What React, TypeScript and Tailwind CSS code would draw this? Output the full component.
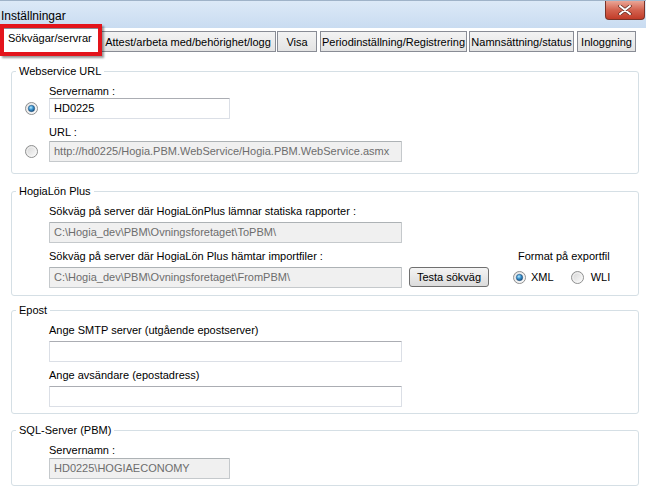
import React from "react";
import clsx from "clsx";

type Tab = { label: string; className: string };

const tabs: Tab[] = [
  { label: "Attest/arbeta med/behörighet/logg", className: "w-[176px]" },
  { label: "Visa", className: "ml-[1px] w-[40px]" },
  { label: "Periodinställning/Registrering", className: "ml-[3px] w-[147px]" },
  { label: "Namnsättning/status", className: "ml-[2px] w-[105px]" },
  { label: "Inloggning", className: "ml-[3px] w-[59px]" },
];

function Radio({ checked }: { checked?: boolean }) {
  return (
    <svg width="13" height="13" viewBox="0 0 13 13" className="shrink-0">
      <defs>
        <linearGradient id="rbBg" x1="0" y1="0" x2="1" y2="1">
          <stop offset="0" stopColor="#d2d2d2" />
          <stop offset="1" stopColor="#ffffff" />
        </linearGradient>
        <radialGradient id="rbDot" cx="0.4" cy="0.35" r="0.75">
          <stop offset="0" stopColor="#b5ebff" />
          <stop offset="0.45" stopColor="#3b93cf" />
          <stop offset="1" stopColor="#0b3b68" />
        </radialGradient>
      </defs>
      <circle cx="6.5" cy="6.5" r="6" fill="url(#rbBg)" stroke="#8f9090" />
      <circle cx="6.5" cy="6.5" r="4.6" fill="none" stroke="#f6f6f6" strokeWidth="0.8" />
      {checked && <circle cx="6.5" cy="6.5" r="3.2" fill="url(#rbDot)" stroke="#1d4f7c" strokeWidth="0.5" />}
    </svg>
  );
}

function TextBox({ value, disabled, className }: { value?: string; disabled?: boolean; className?: string }) {
  return (
    <div
      className={clsx(
        "flex h-[21px] items-center overflow-hidden whitespace-nowrap rounded-[1px] border pl-[4px] text-[11px]",
        disabled
          ? "border-[#c5c9cc] border-t-[#adb2b5] bg-[#f0f0f0] text-[#6d6d6d]"
          : "border-[#dbdfe6] border-t-[#abadb3] bg-white text-black",
        className
      )}
    >
      {value}
    </div>
  );
}

function Label({ children, className }: { children: React.ReactNode; className?: string }) {
  return <div className={clsx("whitespace-nowrap text-[11px] leading-[12px]", className)}>{children}</div>;
}

function GroupBox({ title, className, children }: { title: string; className?: string; children: React.ReactNode }) {
  return (
    <fieldset className={clsx("ml-[11px] w-[628px] rounded-[3px] border border-[#d5dfe5]", className)}>
      <legend className="ml-[4px] px-[3px] text-[11px] leading-[12px]">{title}</legend>
      {children}
    </fieldset>
  );
}

export default function App() {
  return (
    <div className="relative h-[491px] w-[646px] overflow-hidden bg-white font-['Liberation_Sans',Arial,sans-serif] text-black">
      {/* Title bar */}
      <div className="flex h-[28px] items-start justify-between border-t border-[#9fb3c8] bg-linear-to-b from-[#dce9f7] to-[#c9dcf1]">
        <div className="pl-[1px] pt-[8px] text-[12px] leading-[14px]">Inställningar</div>
        <div className="mr-[1px] flex h-[19px] w-[40px] items-center justify-center rounded-b-[4px] border border-t-0 border-[#7a3328] bg-linear-to-b from-[#e9a596] via-[#d3624f] to-[#c13b28]">
          <svg width="14" height="10" viewBox="0 0 14 10">
            <path d="M2 1 L12 9 M12 1 L2 9" stroke="#5b2a22" strokeWidth="3.4" strokeLinecap="round" />
            <path d="M2 1 L12 9 M12 1 L2 9" stroke="#ffffff" strokeWidth="2" strokeLinecap="round" />
          </svg>
        </div>
      </div>

      {/* Tabs */}
      <div className="flex h-[24px] items-end bg-white pl-[2px]">
        <div className="h-[24px] w-[98px] border border-b-0 border-[#898c95] bg-white pl-[5px] pt-[3px] text-[11px] leading-[12px]">
          Sökvägar/servrar
        </div>
        {tabs.map((t) => (
          <div
            key={t.label}
            className={clsx(
              "flex h-[21px] items-center justify-center border border-[#898c95] bg-linear-to-b from-[#f3f3f3] to-[#e3e3e3] text-[11px] leading-[12px] whitespace-nowrap",
              t.className
            )}
          >
            {t.label}
          </div>
        ))}
      </div>

      {/* Red highlight around the selected tab */}
      <div className="pointer-events-none absolute left-0 top-[24px] h-[32px] w-[102px] border-[4px] border-[#e3141b] shadow-[2px_2px_2px_rgba(0,0,0,0.4)]" />

      {/* Webservice URL */}
      <GroupBox title="Webservice URL" className="mt-[13px] pb-[11px]">
        <div className="flex pt-[8px]">
          <div className="flex w-[37px] items-end pb-[4px] pl-[13px]">
            <Radio checked />
          </div>
          <div>
            <Label>Servernamn :</Label>
            <TextBox className="mt-[1px] w-[181px]" value="HD0225" />
          </div>
        </div>
        <div className="mt-[7px] flex">
          <div className="flex w-[37px] items-end pb-[4px] pl-[13px]">
            <Radio />
          </div>
          <div>
            <Label>URL :</Label>
            <TextBox
              disabled
              className="mt-[3px] w-[353px]"
              value="http://hd0225/Hogia.PBM.WebService/Hogia.PBM.WebService.asmx"
            />
          </div>
        </div>
      </GroupBox>

      {/* HogiaLön Plus */}
      <GroupBox title="HogiaLön Plus" className="mt-[11px] pb-[7px]">
        <div className="pl-[37px] pt-[8px]">
          <Label>Sökväg på server där HogiaLönPlus lämnar statiska rapporter :</Label>
          <TextBox disabled className="mt-[5px] w-[353px]" value={"C:\\Hogia_dev\\PBM\\Ovningsforetaget\\ToPBM\\"} />
          <div className="mt-[7px] flex">
            <div>
              <Label>Sökväg på server där HogiaLön Plus hämtar importfiler :</Label>
              <div className="mt-[5px] flex items-start">
                <TextBox disabled className="w-[353px]" value={"C:\\Hogia_dev\\PBM\\Ovningsforetaget\\FromPBM\\"} />
                <button className="ml-[7px] h-[20px] w-[80px] rounded-[3px] border border-[#707070] bg-linear-to-b from-[#f4f4f4] to-[#dcdcdc] text-[11px] leading-[12px]">
                  Testa sökväg
                </button>
              </div>
            </div>
            <div className="ml-[24px]">
              <Label className="pl-[5px]">Format på exportfil</Label>
              <div className="mt-[5px] flex h-[21px] items-center text-[11px]">
                <Radio checked />
                <span className="ml-[5px]">XML</span>
                <span className="ml-[17px] flex items-center">
                  <Radio />
                  <span className="ml-[7px]">WLI</span>
                </span>
              </div>
            </div>
          </div>
        </div>
      </GroupBox>

      {/* Epost */}
      <GroupBox title="Epost" className="mt-[8px] pb-[6px]">
        <div className="pl-[37px] pt-[8px]">
          <Label>Ange SMTP server (utgående epostserver)</Label>
          <TextBox className="mt-[5px] w-[353px]" />
          <Label className="mt-[7px]">Ange avsändare (epostadress)</Label>
          <TextBox className="mt-[5px] w-[353px]" />
        </div>
      </GroupBox>

      {/* SQL-Server */}
      <GroupBox title="SQL-Server (PBM)" className="mt-[10px] pb-[6px]">
        <div className="pl-[37px] pt-[8px]">
          <Label>Servernamn :</Label>
          <TextBox disabled className="mt-[2px] w-[181px]" value={"HD0225\\HOGIAECONOMY"} />
        </div>
      </GroupBox>
    </div>
  );
}
